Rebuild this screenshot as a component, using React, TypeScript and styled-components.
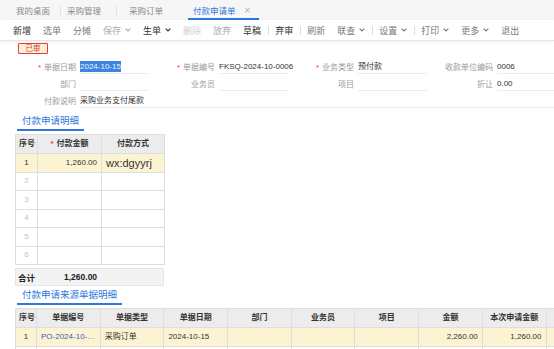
import styled, { createGlobalStyle } from "styled-components";

const GlobalStyle = createGlobalStyle`
  html, body {
    margin: 0;
    padding: 0;
    background: #fff;
  }
  body {
    font-family: "Liberation Sans", "Noto Sans CJK SC", Arial, sans-serif;
    color: #333;
  }
`;

const colors = {
  blue: "#2f78dc",
  link: "#3a62b8",
  label: "#9a9a9a",
  text: "#333",
  border: "#dedede",
  head: "#ececec",
  selected: "#fcf3d3",
  red: "#e0413a",
};

const Page = styled.div`
  width: 554px;
  height: 349px;
  overflow: hidden;
  background: #fff;
`;

// ---- tabs ----
const TabBar = styled.div`
  height: 20px;
  display: flex;
  align-items: center;
  background: #f6f6f6;
  padding-left: 16px;
  font-size: 8.5px;
`;

const Tab = styled.div<{ $active?: boolean; $ml?: number }>`
  height: 20px;
  box-sizing: border-box;
  display: flex;
  align-items: center;
  margin-left: ${(p) => p.$ml ?? 0}px;
  padding: ${(p) => (p.$active ? "2px 8px 0 5px" : "0")};
  color: ${(p) => (p.$active ? colors.blue : "#8a8a8a")};
  border-bottom: ${(p) => (p.$active ? `2px solid ${colors.blue}` : "none")};
  white-space: nowrap;
`;

const TabSep = styled.span<{ $ml: number }>`
  width: 1px;
  height: 9px;
  background: #e2e2e2;
  margin-left: ${(p) => p.$ml}px;
`;

const Close = styled.span`
  margin-left: 8px;
  color: #b5b5b5;
  font-size: 8px;
`;

// ---- toolbar ----
const Toolbar = styled.div`
  height: 20px;
  display: flex;
  align-items: center;
  gap: 12px;
  padding-left: 13px;
  border-bottom: 1px solid #e6e6e6;
  box-shadow: 0 1px 3px rgba(0, 0, 0, 0.07);
  font-size: 9px;
  position: relative;
`;

type Tone = "dark" | "normal" | "muted" | "off";
const toneColor: Record<Tone, string> = {
  dark: "#333",
  normal: "#7a7a7a",
  muted: "#ababab",
  off: "#d0d0d0",
};

const ToolItem = styled.span<{ $tone: Tone }>`
  display: inline-flex;
  align-items: center;
  color: ${(p) => toneColor[p.$tone]};
  white-space: nowrap;
`;

const ToolSep = styled.span`
  width: 1px;
  height: 9px;
  background: #dcdcdc;
  margin: 0 -6px 0 -5px;
`;

const Chevron = () => (
  <svg width="6" height="4" viewBox="0 0 6 4" style={{ marginLeft: 4 }}>
    <path d="M0.6 0.6 L3 3 L5.4 0.6" fill="none" stroke="currentColor" strokeWidth="1.1" />
  </svg>
);

// ---- content ----
const Content = styled.div`
  padding-top: 2px;
`;

const Badge = styled.div`
  margin-left: 18px;
  width: 30px;
  height: 11px;
  box-sizing: border-box;
  border: 1px solid ${colors.red};
  background: #fbefd5;
  color: ${colors.red};
  font-size: 7.5px;
  line-height: 9px;
  text-align: center;
  border-radius: 1px;
`;

const Form = styled.div`
  margin-top: 4px;
  padding-left: 10px;
  display: grid;
  grid-template-columns: repeat(4, 139px);
  grid-auto-rows: 17px;
  font-size: 8px;
`;

const Field = styled.div<{ $wide?: boolean }>`
  display: flex;
  align-items: center;
  grid-column: ${(p) => (p.$wide ? "1 / -1" : "auto")};
`;

const Label = styled.span`
  width: 66px;
  text-align: right;
  color: ${colors.label};
  white-space: nowrap;
`;

const Star = styled.span`
  color: ${colors.red};
  margin-right: 3px;
`;

const Value = styled.span<{ $wide?: boolean }>`
  margin-left: 4px;
  width: ${(p) => (p.$wide ? "auto" : "69px")};
  flex: ${(p) => (p.$wide ? "1" : "none")};
  height: 13px;
  line-height: 13px;
  border-bottom: 1px solid #ececec;
  color: ${colors.text};
  white-space: nowrap;
`;

const Selected = styled.span`
  background: #3d84e2;
  color: #eaf2ff;
  padding: 1px 0;
`;

const SectionTab = styled.div<{ $mt: number }>`
  margin: ${(p) => p.$mt}px 0 0 17px;
  width: fit-content;
  padding: 0 5px;
  height: 16px;
  line-height: 16px;
  font-size: 9.5px;
  color: ${colors.blue};
  border-bottom: 2px solid ${colors.blue};
`;

const TableWrap = styled.div<{ $mt: number }>`
  margin: ${(p) => p.$mt}px 0 0 15px;
  overflow: hidden;
`;

const Table = styled.table<{ $width: number }>`
  border-collapse: collapse;
  table-layout: fixed;
  width: ${(p) => p.$width}px;
  font-size: 8px;
  line-height: 10px;
`;

const HeadRow = styled.tr`
  height: 19px;
`;

const Th = styled.th<{ $align?: string }>`
  padding: 0 3px;
  background: ${colors.head};
  border: 1px solid ${colors.border};
  font-weight: bold;
  color: #333;
  text-align: ${(p) => p.$align ?? "center"};
  white-space: nowrap;
  overflow: hidden;
`;

const Tr = styled.tr<{ $sel?: boolean; $h: number }>`
  height: ${(p) => p.$h}px;
  background: ${(p) => (p.$sel ? colors.selected : "#fff")};
`;

const Td = styled.td<{ $align?: string; $big?: boolean; $dim?: boolean; $link?: boolean }>`
  padding: 0 4px;
  border: 1px solid ${colors.border};
  text-align: ${(p) => p.$align ?? "left"};
  color: ${(p) => (p.$dim ? "#c4c4c4" : p.$link ? colors.link : "#333")};
  font-size: ${(p) => (p.$big ? "11px" : "8px")};
  line-height: ${(p) => (p.$big ? "12px" : "10px")};
  white-space: nowrap;
  overflow: hidden;
  text-overflow: ellipsis;
`;

const TotalRow = styled.div`
  margin: 3px 0 0 15px;
  width: 149px;
  height: 18px;
  box-sizing: border-box;
  border: 1px solid #e6e6e6;
  background: #f3f3f3;
  display: flex;
  align-items: center;
  font-size: 8.5px;
  font-weight: bold;
  color: #222;
`;

const TotalLabel = styled.span`
  width: 46px;
  padding-left: 2px;
`;

const detailRows = [
  { no: 1, amount: "1,260.00", method: "wx:dgyyrj" },
  { no: 2 },
  { no: 3 },
  { no: 4 },
  { no: 5 },
  { no: 6 },
];

const sourceCols = ["单据编号", "单据类型", "单据日期", "部门", "业务员", "项目", "金额", "本次申请金额", "累计申请金额"];
const sourceColWidth = 63.7;

export default function App() {
  return (
    <Page>
      <GlobalStyle />
      <TabBar>
        <Tab>我的桌面</Tab>
        <TabSep $ml={10} />
        <Tab $ml={6}>采购管理</Tab>
        <TabSep $ml={15} />
        <Tab $ml={12}>采购订单</Tab>
        <Tab $active $ml={25}>
          付款申请单<Close>✕</Close>
        </Tab>
      </TabBar>

      <Toolbar>
        <ToolItem $tone="dark">新增</ToolItem>
        <ToolItem $tone="normal">选单</ToolItem>
        <ToolItem $tone="normal">分摊</ToolItem>
        <ToolItem $tone="muted">保存<Chevron /></ToolItem>
        <ToolItem $tone="dark">生单<Chevron /></ToolItem>
        <ToolItem $tone="off">删除</ToolItem>
        <ToolItem $tone="muted">放弃</ToolItem>
        <ToolItem $tone="dark">草稿</ToolItem>
        <ToolSep />
        <ToolItem $tone="dark">弃审</ToolItem>
        <ToolSep />
        <ToolItem $tone="normal">刷新</ToolItem>
        <ToolItem $tone="normal">联查<Chevron /></ToolItem>
        <ToolSep />
        <ToolItem $tone="normal">设置<Chevron /></ToolItem>
        <ToolSep />
        <ToolItem $tone="normal">打印<Chevron /></ToolItem>
        <ToolItem $tone="normal">更多<Chevron /></ToolItem>
        <ToolItem $tone="normal">退出</ToolItem>
      </Toolbar>

      <Content>
        <Badge>已审</Badge>
        <Form>
          <Field>
            <Label><Star>*</Star>单据日期</Label>
            <Value><Selected>2024-10-15</Selected></Value>
          </Field>
          <Field>
            <Label><Star>*</Star>单据编号</Label>
            <Value>FKSQ-2024-10-0006</Value>
          </Field>
          <Field>
            <Label><Star>*</Star>业务类型</Label>
            <Value>预付款</Value>
          </Field>
          <Field>
            <Label>收款单位编码</Label>
            <Value>0006</Value>
          </Field>

          <Field>
            <Label>部门</Label>
            <Value />
          </Field>
          <Field>
            <Label>业务员</Label>
            <Value />
          </Field>
          <Field>
            <Label>项目</Label>
            <Value />
          </Field>
          <Field>
            <Label>折让</Label>
            <Value>0.00</Value>
          </Field>

          <Field $wide>
            <Label>付款说明</Label>
            <Value $wide>采购业务支付尾款</Value>
          </Field>
        </Form>

        <SectionTab $mt={4}>付款申请明细</SectionTab>
        <TableWrap $mt={3}>
          <Table $width={149}>
            <colgroup>
              <col style={{ width: 22 }} />
              <col style={{ width: 64 }} />
              <col style={{ width: 63 }} />
            </colgroup>
            <thead>
              <HeadRow>
                <Th $align="left">序号</Th>
                <Th><Star>*</Star>付款金额</Th>
                <Th>付款方式</Th>
              </HeadRow>
            </thead>
            <tbody>
              {detailRows.map((r) => (
                <Tr key={r.no} $h={18.5} $sel={r.no === 1}>
                  <Td $align="center" $dim={r.no !== 1}>{r.no}</Td>
                  <Td $align="right">{r.amount}</Td>
                  <Td $big>{r.method}</Td>
                </Tr>
              ))}
            </tbody>
          </Table>
        </TableWrap>
        <TotalRow>
          <TotalLabel>合计</TotalLabel>
          <span>1,260.00</span>
        </TotalRow>

        <SectionTab $mt={1}>付款申请来源单据明细</SectionTab>
        <TableWrap $mt={3}>
          <Table $width={21 + sourceCols.length * sourceColWidth}>
            <colgroup>
              <col style={{ width: 21 }} />
              {sourceCols.map((c) => (
                <col key={c} style={{ width: sourceColWidth }} />
              ))}
            </colgroup>
            <thead>
              <HeadRow>
                <Th $align="left">序号</Th>
                {sourceCols.map((c) => (
                  <Th key={c}>{c}</Th>
                ))}
              </HeadRow>
            </thead>
            <tbody>
              <Tr $h={19} $sel>
                <Td $align="center">1</Td>
                <Td $link>PO-2024-10-0008</Td>
                <Td>采购订单</Td>
                <Td>2024-10-15</Td>
                <Td />
                <Td />
                <Td />
                <Td $align="right">2,260.00</Td>
                <Td $align="right">1,260.00</Td>
                <Td $align="right">1,260.00</Td>
              </Tr>
              <Tr $h={19}>
                <Td $align="center" $dim>2</Td>
                {sourceCols.map((c) => (
                  <Td key={c} />
                ))}
              </Tr>
            </tbody>
          </Table>
        </TableWrap>
      </Content>
    </Page>
  );
}
